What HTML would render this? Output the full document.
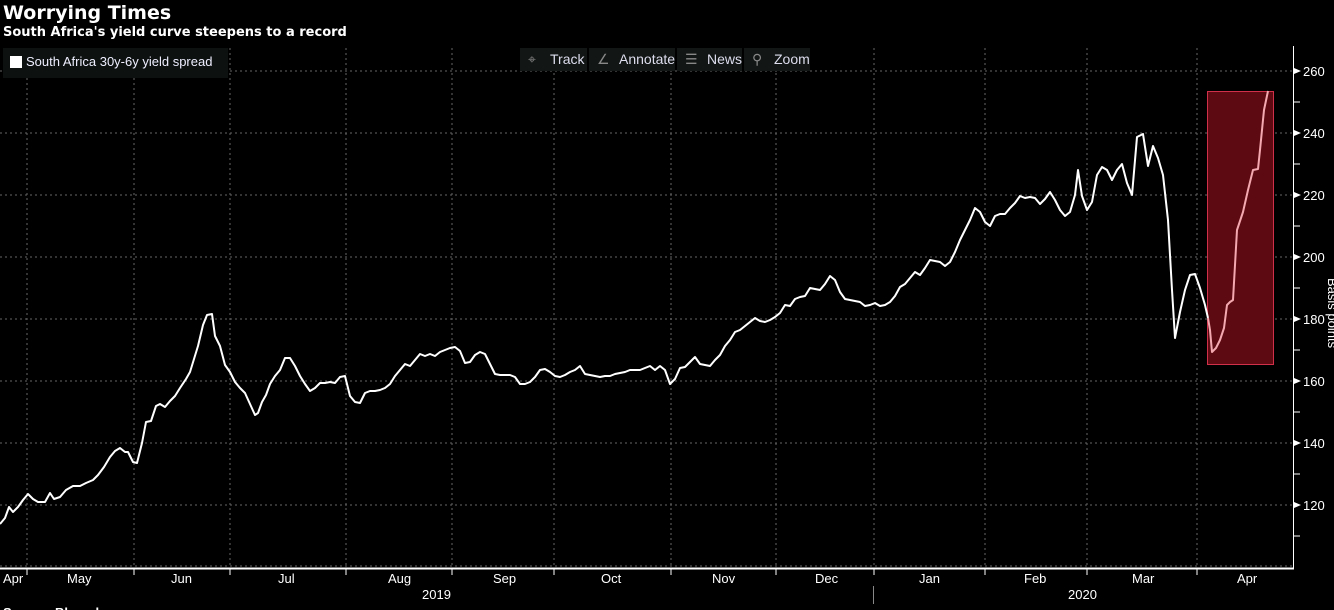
<!DOCTYPE html>
<html><head><meta charset="utf-8"><style>
body{margin:0;width:1334px;height:610px;background:#000;overflow:hidden;font-family:"Liberation Sans",sans-serif;color:#fff;position:relative}
.t{position:absolute;left:3px;top:2px;font-size:19px;font-weight:bold;font-family:"DejaVu Sans",sans-serif}
.s{position:absolute;left:3px;top:25px;font-size:13px;font-weight:bold;font-family:"DejaVu Sans",sans-serif}
.lg{position:absolute;left:3px;top:48px;width:225px;height:30px;background:#0d110f;font-size:13px}
.lg span{position:absolute;left:7px;top:8px;width:12px;height:12px;background:#fff}
.lg b{position:absolute;left:23px;top:6px;font-weight:normal;color:#eef}
.btn{position:absolute;top:48px;height:23px;background:#121614;font-size:14px;color:#dde;line-height:23px}
</style></head><body>
<svg width="1334" height="610" style="position:absolute;left:0;top:0">
<g stroke="#666" stroke-dasharray="2,3" stroke-width="1">
<line x1="0" x2="1293" y1="71" y2="71"/><line x1="0" x2="1293" y1="133" y2="133"/><line x1="0" x2="1293" y1="195" y2="195"/><line x1="0" x2="1293" y1="257" y2="257"/><line x1="0" x2="1293" y1="319" y2="319"/><line x1="0" x2="1293" y1="381" y2="381"/><line x1="0" x2="1293" y1="443" y2="443"/><line x1="0" x2="1293" y1="505" y2="505"/><line x1="0" x2="1293" y1="566" y2="566"/>
<line y1="48" y2="566" x1="27" x2="27"/><line y1="48" y2="566" x1="134" x2="134"/><line y1="48" y2="566" x1="230" x2="230"/><line y1="48" y2="566" x1="346" x2="346"/><line y1="48" y2="566" x1="452" x2="452"/><line y1="48" y2="566" x1="554" x2="554"/><line y1="48" y2="566" x1="671" x2="671"/><line y1="48" y2="566" x1="776" x2="776"/><line y1="48" y2="566" x1="874" x2="874"/><line y1="48" y2="566" x1="985" x2="985"/><line y1="48" y2="566" x1="1087" x2="1087"/><line y1="48" y2="566" x1="1197" x2="1197"/>
</g>
<line x1="0" x2="1294" y1="568.5" y2="568.5" stroke="#fff" stroke-width="2"/>
<line x1="1293.5" x2="1293.5" y1="46" y2="569" stroke="#fff" stroke-width="1"/>
<g stroke="#fff"><line x1="134" x2="134" y1="569" y2="575"/><line x1="230" x2="230" y1="569" y2="575"/><line x1="346" x2="346" y1="569" y2="575"/><line x1="452" x2="452" y1="569" y2="575"/><line x1="554" x2="554" y1="569" y2="575"/><line x1="671" x2="671" y1="569" y2="575"/><line x1="776" x2="776" y1="569" y2="575"/><line x1="874" x2="874" y1="569" y2="575"/><line x1="985" x2="985" y1="569" y2="575"/><line x1="1087" x2="1087" y1="569" y2="575"/><line x1="1197" x2="1197" y1="569" y2="575"/><line x1="27" x2="27" y1="569" y2="575"/></g>
<line x1="873.5" x2="873.5" y1="586" y2="604" stroke="#888"/>
<g fill="#fff"><path d="M1294 68l7 3-7 3z"/><path d="M1294 130l7 3-7 3z"/><path d="M1294 192l7 3-7 3z"/><path d="M1294 254l7 3-7 3z"/><path d="M1294 316l7 3-7 3z"/><path d="M1294 378l7 3-7 3z"/><path d="M1294 440l7 3-7 3z"/><path d="M1294 502l7 3-7 3z"/></g>
<g stroke="#fff"><line x1="1294" x2="1300" y1="102" y2="102"/><line x1="1294" x2="1300" y1="164" y2="164"/><line x1="1294" x2="1300" y1="226" y2="226"/><line x1="1294" x2="1300" y1="288" y2="288"/><line x1="1294" x2="1300" y1="350" y2="350"/><line x1="1294" x2="1300" y1="412" y2="412"/><line x1="1294" x2="1300" y1="474" y2="474"/><line x1="1294" x2="1300" y1="536" y2="536"/></g>
<g fill="#fff" font-family="Liberation Sans Narrow, Liberation Sans, sans-serif" font-size="13">
<text x="1303" y="76">260</text><text x="1303" y="138">240</text><text x="1303" y="200">220</text><text x="1303" y="262">200</text><text x="1303" y="324">180</text><text x="1303" y="386">160</text><text x="1303" y="448">140</text><text x="1303" y="510">120</text>
<text x="3" y="583">Apr</text><text x="67" y="583">May</text><text x="171" y="583">Jun</text><text x="278" y="583">Jul</text><text x="388" y="583">Aug</text><text x="493" y="583">Sep</text><text x="601" y="583">Oct</text><text x="712" y="583">Nov</text><text x="815" y="583">Dec</text><text x="919" y="583">Jan</text><text x="1024" y="583">Feb</text><text x="1132" y="583">Mar</text><text x="1237" y="583">Apr</text>
<text x="422" y="599">2019</text><text x="1068" y="599">2020</text>
<text transform="translate(1328,278) rotate(90)">Basis points</text>
<text x="3" y="617" font-weight="bold">Source: Bloomberg</text>
</g>
<rect x="1207.5" y="91.5" width="66" height="273" fill="#5e0a12" stroke="#d0304a"/>
<polyline fill="none" stroke="#fff" stroke-width="2" stroke-linejoin="round" points="0,524 5,518 9,507 13,512 18,507 23,500 28,494 33,499 38,502 45,502 50,493 54,499 60,497 66,490 73,486 80,486 86,483 93,480 98,475 104,467 110,457 115,451 120,448 125,452 128,452 133,462 137,463 142,443 146,422 151,421 156,406 160,404 165,407 170,401 175,396 180,388 186,379 190,372 194,359 198,346 203,325 207,315 212,314 215,336 220,346 225,365 230,372 235,382 240,388 245,393 250,404 255,415 258,413 262,402 266,395 270,384 275,376 280,370 285,358 290,358 295,366 300,376 305,384 310,391 315,388 320,383 325,383 330,382 335,383 340,377 345,376 350,396 355,402 360,403 365,393 370,391 375,391 380,390 385,388 390,384 395,376 400,370 405,364 410,366 415,360 420,354 425,356 430,354 435,356 440,352 445,350 450,348 455,347 460,351 465,363 470,362 475,355 480,352 485,354 490,364 495,374 500,375 505,375 510,375 515,377 520,384 525,384 530,382 535,377 540,370 545,369 550,372 555,376 560,377 565,375 570,372 575,370 580,366 585,374 590,375 595,376 600,377 605,376 610,376 615,374 620,373 625,372 630,370 635,370 640,370 645,368 650,366 655,370 660,366 665,370 670,384 675,379 680,368 685,367 690,362 695,357 700,364 705,365 710,366 715,360 720,355 725,346 730,340 735,332 740,330 745,326 750,322 755,318 760,321 765,322 770,320 775,317 780,313 785,305 790,306 795,299 800,297 805,296 810,288 815,289 820,290 825,284 830,276 835,280 840,292 845,299 850,300 855,301 860,302 865,306 870,305 875,303 880,306 885,305 890,302 895,296 900,287 905,284 910,278 915,272 920,275 925,268 930,260 935,261 940,262 945,266 950,262 955,252 960,240 965,230 970,220 975,208 980,212 985,222 990,226 995,216 1000,214 1005,214 1010,208 1015,203 1020,196 1025,198 1030,197 1035,198 1040,204 1045,199 1050,192 1055,200 1060,210 1065,216 1070,212 1075,195 1078,170 1082,196 1087,210 1092,202 1097,175 1102,167 1107,170 1112,180 1117,170 1122,164 1127,183 1132,195 1137,137 1143,134 1148,166 1153,146 1158,158 1163,175 1168,220 1172,290 1175,338 1180,312 1185,290 1190,275 1195,274 1200,288 1205,305 1208,318"/>
<polyline fill="none" stroke="#f4a8b0" stroke-width="2" stroke-linejoin="round" points="1208,318 1210,330 1212,352 1216,348 1220,340 1224,328 1227,305 1230,302 1233,300 1237,230 1243,212 1248,190 1253,170 1258,169 1260,150 1264,110 1268,91"/>
</svg>
<div class="t">Worrying Times</div>
<div class="s">South Africa's yield curve steepens to a record</div>
<div class="lg"><span></span><b>South Africa 30y-6y yield spread</b></div>
<div class="btn" style="left:520px;width:67px"><span style="position:absolute;left:8px;color:#888">⌖</span><span style="position:absolute;left:30px">Track</span></div>
<div class="btn" style="left:589px;width:86px"><span style="position:absolute;left:8px;color:#888">∠</span><span style="position:absolute;left:30px">Annotate</span></div>
<div class="btn" style="left:677px;width:65px"><span style="position:absolute;left:8px;color:#888">☰</span><span style="position:absolute;left:30px">News</span></div>
<div class="btn" style="left:744px;width:66px"><span style="position:absolute;left:8px;color:#888">⚲</span><span style="position:absolute;left:30px">Zoom</span></div>
</body></html>
